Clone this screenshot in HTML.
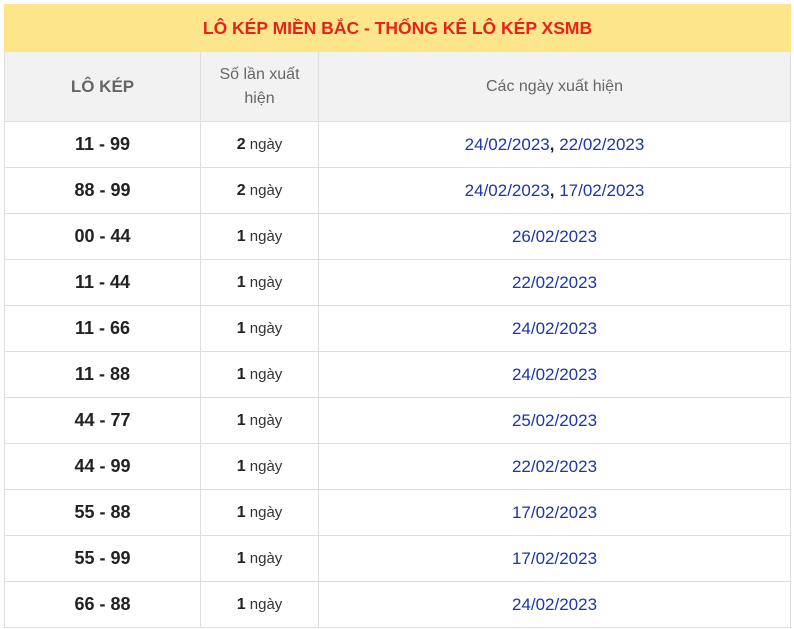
<!DOCTYPE html>
<html><head><meta charset="utf-8"><style>
body{margin:0;background:#fff;font-family:"Liberation Sans",Arial,sans-serif;}
table{position:absolute;left:4px;top:4px;width:787px;border-collapse:collapse;table-layout:fixed;}
td,th{border:1px solid #dedede;text-align:center;padding:0;}
.t{background:#fde58c;color:#e2261b;font-weight:bold;font-size:17.5px;height:45px;border-color:#fde58c;padding-top:1px;}
.h th{background:#f2f2f2;color:#666;font-weight:normal;font-size:16px;height:69px;line-height:24px;}
.h th.b{font-weight:bold;font-size:17px;}
tr.r td{height:45px;}
.n{font-weight:bold;font-size:18px;color:#222;}
.c{font-size:15px;color:#333;}
.c b{color:#222;font-size:16px;}
.d{font-size:17px;color:#1b36a6;}
.d b{color:#222;}
</style></head><body>
<table>
<colgroup><col style="width:196px"><col style="width:118px"><col></colgroup>
<tr><td colspan="3" class="t">LÔ KÉP MIỀN BẮC - THỐNG KÊ LÔ KÉP XSMB</td></tr>
<tr class="h"><th class="b">LÔ KÉP</th><th>Số lần xuất<br>hiện</th><th>Các ngày xuất hiện</th></tr>
<tr class="r"><td class="n">11 - 99</td><td class="c"><b>2</b> ngày</td><td class="d">24/02/2023<b>,</b> 22/02/2023</td></tr>
<tr class="r"><td class="n">88 - 99</td><td class="c"><b>2</b> ngày</td><td class="d">24/02/2023<b>,</b> 17/02/2023</td></tr>
<tr class="r"><td class="n">00 - 44</td><td class="c"><b>1</b> ngày</td><td class="d">26/02/2023</td></tr>
<tr class="r"><td class="n">11 - 44</td><td class="c"><b>1</b> ngày</td><td class="d">22/02/2023</td></tr>
<tr class="r"><td class="n">11 - 66</td><td class="c"><b>1</b> ngày</td><td class="d">24/02/2023</td></tr>
<tr class="r"><td class="n">11 - 88</td><td class="c"><b>1</b> ngày</td><td class="d">24/02/2023</td></tr>
<tr class="r"><td class="n">44 - 77</td><td class="c"><b>1</b> ngày</td><td class="d">25/02/2023</td></tr>
<tr class="r"><td class="n">44 - 99</td><td class="c"><b>1</b> ngày</td><td class="d">22/02/2023</td></tr>
<tr class="r"><td class="n">55 - 88</td><td class="c"><b>1</b> ngày</td><td class="d">17/02/2023</td></tr>
<tr class="r"><td class="n">55 - 99</td><td class="c"><b>1</b> ngày</td><td class="d">17/02/2023</td></tr>
<tr class="r"><td class="n">66 - 88</td><td class="c"><b>1</b> ngày</td><td class="d">24/02/2023</td></tr>
</table>
</body></html>
